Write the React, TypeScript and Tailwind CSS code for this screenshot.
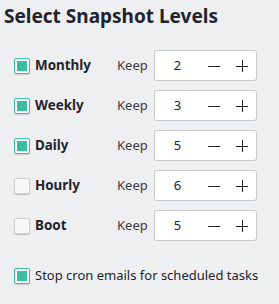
import React from "react";

const rows = [
  { label: "Monthly", checked: true, value: 2 },
  { label: "Weekly", checked: true, value: 3 },
  { label: "Daily", checked: true, value: 5 },
  { label: "Hourly", checked: false, value: 6 },
  { label: "Boot", checked: false, value: 5 },
];

function Box({ checked }: { checked: boolean }) {
  return checked ? (
    <span className="w-[16px] h-[16px] shrink-0 rounded-[2px] border border-[#37bfa3] bg-white p-[2px] shadow-[0_1px_1px_rgba(0,0,0,0.15)]">
      <span className="block w-full h-full bg-[#37bfa3]" />
    </span>
  ) : (
    <span className="w-[16px] h-[16px] shrink-0 rounded-[2px] border border-[#cfcfcf] bg-[#f7f7f7] shadow-[0_1px_1px_rgba(0,0,0,0.2)]" />
  );
}

export default function App() {
  return (
    <div
      className="w-[279px] h-[304px] bg-[#eeeff1] text-[#23232d]"
      style={{ fontFamily: '"Noto Sans", "Open Sans", sans-serif' }}
    >
      <h1 className="pl-[4px] pt-[4px] text-[19px] leading-[25px] font-bold">Select Snapshot Levels</h1>
      <div className="pl-[14px] mt-[21px] flex flex-col gap-[9px]">
        {rows.map((r) => (
          <div key={r.label} className="flex items-center h-[31px]">
            <Box checked={r.checked} />
            <span className="ml-[5px] w-[82px] text-[13.4px] font-bold">{r.label}</span>
            <span className="text-[13px] text-[#3a3a44]">Keep</span>
            <div className="ml-[6px] w-[103px] h-[31px] bg-white border border-[#c9c9cc] rounded-[3px] flex items-center text-[13px]">
              <span className="w-[46px] text-center">{r.value}</span>
              <span className="w-[28px] flex justify-center">
                <svg width="12" height="12" viewBox="0 0 12 12"><path d="M0 6.5H12" stroke="#23232d" strokeWidth="1" /></svg>
              </span>
              <span className="w-[28px] flex justify-center">
                <svg width="12" height="12" viewBox="0 0 12 12"><path d="M0 6.5H12M6.5 0V12" stroke="#23232d" strokeWidth="1" /></svg>
              </span>
            </div>
          </div>
        ))}
      </div>
      <div className="pl-[14px] mt-[25px] flex items-center">
        <Box checked />
        <span className="ml-[5px] text-[13px]">Stop cron emails for scheduled tasks</span>
      </div>
    </div>
  );
}
